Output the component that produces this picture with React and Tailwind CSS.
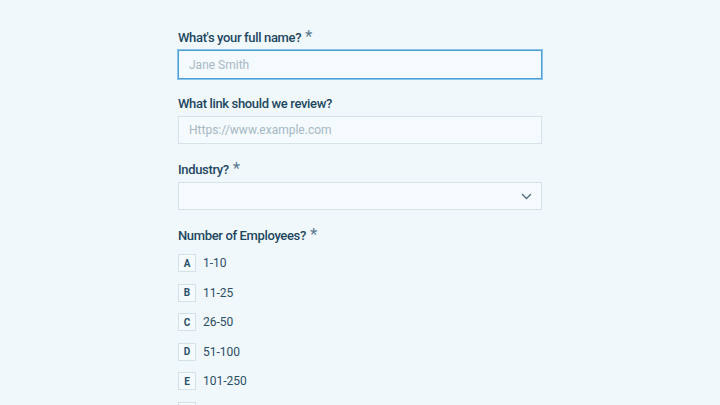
import React from "react";

const font = { fontFamily: "Roboto, 'Noto Sans', sans-serif" };

function Label({ children, required }) {
  return (
    <div className="flex items-start h-5 mb-[2px] text-[13px] leading-5 font-medium tracking-[-0.35px] text-[#1d4760]">
      <span>{children}</span>
      {required && (
        <span className="ml-[4px] text-[17px] leading-[17px] font-normal text-[#5b7b8e]">*</span>
      )}
    </div>
  );
}

const options = [
  ["A", "1-10"],
  ["B", "11-25"],
  ["C", "26-50"],
  ["D", "51-100"],
  ["E", "101-250"],
  ["F", "251-500"],
];

export default function App() {
  return (
    <div className="w-[720px] h-[405px] overflow-hidden bg-[#f1f8fc]" style={font}>
      <div className="w-[364px] ml-[178px] pt-[28px]">
        <div className="mb-[15px]">
          <Label required>What's your full name?</Label>
          <div className="h-[29px] border border-[#4b9fd6] shadow-[0_0_0_1px_#8cc3e8] bg-[#f4fafd] flex items-center px-[10px] text-[12px] text-[#a6b8c3]">
            Jane Smith
          </div>
        </div>

        <div className="mb-[16px]">
          <Label>What link should we review?</Label>
          <div className="h-[28px] border border-[#d6e3ea] bg-[#f4fafd] flex items-center px-[10px] text-[12px] text-[#a6b8c3]">
            Https://www.example.com
          </div>
        </div>

        <div className="mb-[16px]">
          <Label required>Industry?</Label>
          <div className="h-[28px] border border-[#d6e3ea] bg-[#f4fafd] flex items-center justify-end pr-[9px]">
            <svg width="11" height="7" viewBox="0 0 11 7" fill="none">
              <path d="M1 1l4.5 4.5L10 1" stroke="#52697a" strokeWidth="1.3" />
            </svg>
          </div>
        </div>

        <div>
          <Label required>Number of Employees?</Label>
          <div className="flex flex-col gap-[11.6px] pt-[6px]">
            {options.map(([k, v]) => (
              <div key={k} className="flex items-center">
                <div className="w-[18px] h-[18px] border border-[#d3e1e9] bg-[#f5fafd] flex items-center justify-center text-[10px] font-bold text-[#2a526a]">
                  {k}
                </div>
                <span className="ml-[7px] text-[12px] text-[#2a4e64]">{v}</span>
              </div>
            ))}
          </div>
        </div>
      </div>
    </div>
  );
}
